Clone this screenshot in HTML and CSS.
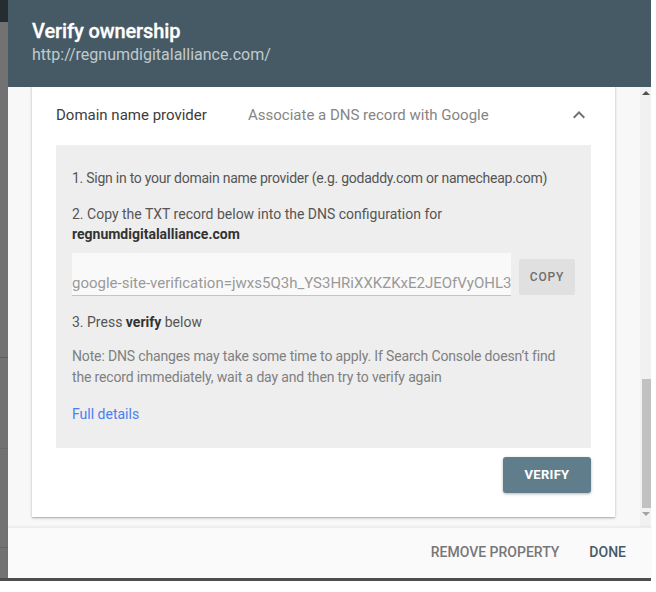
FILE: index.html
```html
<!DOCTYPE html>
<html lang="en">
<head>
<meta charset="utf-8">
<title>Verify ownership</title>
<link rel="stylesheet" href="styles.css">
</head>
<body>
<div class="window">
  <div class="stage">
    <div class="backdrop">
      <div class="bd-top"></div>
      <div class="bd-a"></div>
      <div class="bd-b"></div>
      <div class="bd-c"></div>
      <div class="bd-d"></div>
    </div>
    <div class="dialog">
      <header class="dlg-header">
        <h1 class="dlg-title">Verify ownership</h1>
        <div class="dlg-url">http://regnumdigitalalliance.com/</div>
      </header>
      <div class="dlg-body">
        <div class="scroll">
          <div class="card">
            <div class="card-row">
              <span class="row-label">Domain name provider</span>
              <span class="row-desc">Associate a DNS record with Google</span>
              <svg class="chev" width="24" height="24" viewBox="0 0 24 24"><path d="M7.41 15.41L12 10.83l4.59 4.58L18 14l-6-6-6 6z"/></svg>
            </div>
            <div class="steps">
              <p class="step step1">1. Sign in to your domain name provider (e.g. godaddy.com or namecheap.com)</p>
              <p class="step step2">2. Copy the TXT record below into the DNS configuration for <br><b>regnumdigitalalliance.com</b></p>
              <div class="record">
                <div class="record-field">google-site-verification=jwxs5Q3h_YS3HRiXXKZKxE2JEOfVyOHL3</div>
                <button class="copy-btn">COPY</button>
              </div>
              <p class="step step3">3. Press <b>verify</b> below</p>
              <p class="note">Note: DNS changes may take some time to apply. If Search Console doesn’t find the record immediately, wait a day and then try to verify again</p>
              <a class="details" href="#">Full details</a>
            </div>
            <div class="card-actions">
              <button class="verify-btn">VERIFY</button>
            </div>
          </div>
        </div>
        <div class="scrollbar">
          <div class="sb-btn"><span class="tri-up"></span></div>
          <div class="sb-space"></div>
          <div class="sb-thumb"></div>
          <div class="sb-btn"><span class="tri-down"></span></div>
        </div>
      </div>
      <footer class="dlg-footer">
        <button class="txt-btn muted">REMOVE PROPERTY</button>
        <button class="txt-btn primary">DONE</button>
      </footer>
    </div>
  </div>
  <div class="bottom-line"></div>
</div>
</body>
</html>
```

FILE: styles.css
```css
html, body {
  margin: 0;
  padding: 0;
  background: #ffffff;
}
body {
  font-family: Roboto, "Noto Sans", Arial, sans-serif;
  width: 656px;
  height: 592px;
  overflow: hidden;
}
.window {
  display: flex;
  flex-direction: column;
  width: 651px;
}
.stage {
  display: flex;
  height: 578px;
}
.backdrop {
  width: 8px;
  display: flex;
  flex-direction: column;
  background: #727272;
}
.bd-top { height: 22px; background: #262d31; }
.bd-a { height: 335px; border-bottom: 1px solid #5e5e5e; }
.bd-b { height: 90px; border-bottom: 1px solid #6a6a6a; }
.bd-c { height: 98px; border-bottom: 1px solid #666; }
.bd-d { flex: 1; }
.dialog {
  width: 643px;
  display: flex;
  flex-direction: column;
  background: #fafafa;
}
.dlg-header {
  height: 87px;
  box-sizing: border-box;
  background: #465a65;
  padding: 18px 24px 0;
}
.dlg-title {
  margin: 0;
  font-size: 20px;
  line-height: 26px;
  font-weight: 500;
  letter-spacing: -0.1px;
  color: #ffffff;
  -webkit-text-stroke: 0.3px #ffffff;
}
.dlg-url {
  font-size: 16px;
  line-height: 21px;
  color: #c1cace;
}
.dlg-body {
  flex: 1;
  display: flex;
  min-height: 0;
  background: #f8f8f8;
}
.scroll {
  flex: 1;
  overflow: hidden;
  display: flex;
  flex-direction: column;
  justify-content: flex-end;
  padding: 0 25px 10px 24px;
}
.card {
  flex-shrink: 0;
  background: #ffffff;
  box-shadow: 0 1px 3px rgba(0,0,0,0.22), 0 1px 1px rgba(0,0,0,0.12);
  padding: 0 24px 24px;
}
.card-row {
  height: 60px;
  display: flex;
  align-items: center;
  font-size: 15px;
}
.row-label {
  width: 192px;
  color: #3c3c3c;
}
.row-desc {
  flex: 1;
  color: #858585;
}
.chev { fill: #6f6f6f; }
.steps {
  background: #eeeeee;
  padding: 23px 16px 24px;
  font-size: 14px;
  line-height: 20px;
  color: #555555;
}
.step { margin: 0; }
.step1 { letter-spacing: -0.25px; }
.step b { color: #333; font-weight: 700; }
.step2 { margin-top: 16px; }
.record {
  display: flex;
  align-items: flex-start;
  gap: 8px;
  margin-top: 9px;
}
.record-field {
  flex: 1;
  min-width: 0;
  height: 43px;
  box-sizing: border-box;
  display: flex;
  align-items: flex-end;
  padding-bottom: 2px;
  background: #f9f9f9;
  border-bottom: 1px solid #c4c4c4;
  font-size: 15px;
  line-height: 20px;
  color: #999999;
  white-space: nowrap;
  overflow: hidden;
}
.copy-btn {
  width: 56px;
  height: 36px;
  margin-top: 6px;
  border: none;
  border-radius: 2px;
  background: #e0e0e0;
  color: #6e6e6e;
  font-family: inherit;
  font-size: 12px;
  font-weight: 500;
  letter-spacing: 0.8px;
  padding: 0;
}
.step3 { margin-top: 16px; }
.note {
  margin: 14px 0 0;
  line-height: 21px;
  letter-spacing: -0.15px;
  color: #808080;
}
.details {
  display: block;
  margin-top: 16px;
  color: #4a7ff0;
  text-decoration: none;
}
.card-actions {
  display: flex;
  justify-content: flex-end;
  margin-top: 9px;
}
.verify-btn {
  width: 88px;
  height: 36px;
  border: none;
  border-radius: 3px;
  background: #607d8b;
  color: #ffffff;
  font-family: inherit;
  font-size: 13px;
  font-weight: 700;
  letter-spacing: 0.3px;
  box-shadow: 0 1px 3px rgba(0,0,0,0.3);
  padding: 0 0 2px;
}
.scrollbar {
  width: 11px;
  display: flex;
  flex-direction: column;
  background: #f1f1f1;
  padding-bottom: 7px;
}
.sb-btn {
  height: 12px;
  display: flex;
  align-items: center;
  justify-content: center;
}
.tri-up {
  width: 0; height: 0;
  border-left: 4px solid transparent;
  border-right: 4px solid transparent;
  border-bottom: 4px solid #505050;
}
.tri-down {
  width: 0; height: 0;
  border-left: 4px solid transparent;
  border-right: 4px solid transparent;
  border-top: 4px solid #a3a3a3;
}
.sb-space { flex: 1; }
.sb-thumb {
  height: 129px;
  margin-left: 2px;
  background: #c1c1c1;
}
.dlg-footer {
  height: 51px;
  box-sizing: border-box;
  display: flex;
  align-items: center;
  justify-content: flex-end;
  padding: 0 17px 2px 0;
  gap: 14px;
  background: #fafafa;
  border-top: 1px solid #ececec;
  box-shadow: 0 -1px 2px rgba(0,0,0,0.05);
  position: relative;
}
.txt-btn {
  border: none;
  background: transparent;
  font-family: inherit;
  font-size: 14px;
  font-weight: 500;
  padding: 0 8px;
  height: 36px;
}
.txt-btn.muted { color: #777777; }
.txt-btn.primary { color: #455a64; }
.bottom-line {
  height: 3px;
  background: #4e4e4e;
}
```
